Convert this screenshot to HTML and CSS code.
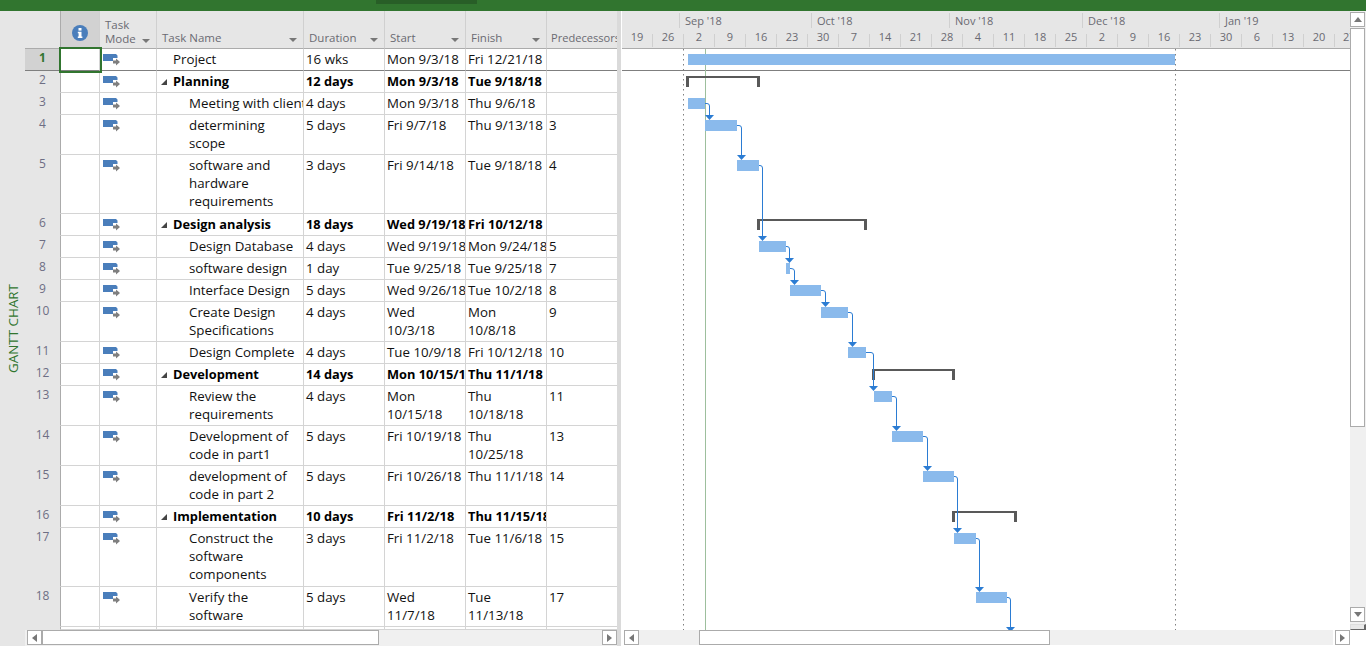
FILE: index.html
```html
<!DOCTYPE html>
<html lang="en">
<head>
    <meta charset="UTF-8">
    <title>Gantt Chart</title>
    <link rel="stylesheet" href="styles.css">
</head>
<body>
    <svg class="defs" width="0" height="0">
        <symbol id="mode" viewBox="0 0 17 12">
            <path fill="#4a7ebb" d="M0 0H13L14.5 1.5V4H10V7H0Z"/>
            <path fill="#7f7f7f" d="M10 6.5H13V4.5L17 8L13 11.5V9.5H10Z"/>
        </symbol>
    </svg>

    <div class="ribbon"><div class="ribbon-tab"></div></div>

    <div class="main">
        <div class="side"><span class="side-label">GANTT CHART</span></div>

        <div class="sheet">
            <div class="table">
                <div class="row head">
                    <div class="hc corner"></div>
                    <div class="hc info">
                        <svg width="16" height="16" viewBox="0 0 16 16"><circle cx="8" cy="8" r="8" fill="#4a7ebb"/><rect x="6.5" y="3" width="3" height="2.6" fill="#fff"/><path fill="#fff" d="M5.8 6.8H9.5V11.6H10.4V13H5.8V11.6H6.6V8.2H5.8Z"/></svg>
                    </div>
                    <div class="hc mode-h"><span>Task<br>Mode</span><i class="drop"></i></div>
                    <div class="hc"><span>Task Name</span><i class="drop"></i></div>
                    <div class="hc"><span>Duration</span><i class="drop"></i></div>
                    <div class="hc"><span>Start</span><i class="drop"></i></div>
                    <div class="hc"><span>Finish</span><i class="drop"></i></div>
                    <div class="hc pred-h"><span>Predecessors</span></div>
                </div>

                <div class="row one selected">
                    <div class="num cur">1</div><div class="c sel"></div><div class="c ic"><svg class="mi"><use href="#mode"/></svg></div>
                    <div class="c top">Project</div><div class="c">16 wks</div><div class="c">Mon 9/3/18</div><div class="c">Fri 12/21/18</div><div class="c"></div>
                </div>
                <div class="row one sum">
                    <div class="num">2</div><div class="c"></div><div class="c ic"><svg class="mi"><use href="#mode"/></svg></div>
                    <div class="c top"><i class="twist"></i>Planning</div><div class="c">12 days</div><div class="c">Mon 9/3/18</div><div class="c">Tue 9/18/18</div><div class="c"></div>
                </div>
                <div class="row one">
                    <div class="num">3</div><div class="c"></div><div class="c ic"><svg class="mi"><use href="#mode"/></svg></div>
                    <div class="c sub">Meeting with client</div><div class="c">4 days</div><div class="c">Mon 9/3/18</div><div class="c">Thu 9/6/18</div><div class="c"></div>
                </div>
                <div class="row two">
                    <div class="num">4</div><div class="c"></div><div class="c ic"><svg class="mi"><use href="#mode"/></svg></div>
                    <div class="c sub">determining<br>scope</div><div class="c">5 days</div><div class="c">Fri 9/7/18</div><div class="c">Thu 9/13/18</div><div class="c">3</div>
                </div>
                <div class="row three">
                    <div class="num">5</div><div class="c"></div><div class="c ic"><svg class="mi"><use href="#mode"/></svg></div>
                    <div class="c sub">software and<br>hardware<br>requirements</div><div class="c">3 days</div><div class="c">Fri 9/14/18</div><div class="c">Tue 9/18/18</div><div class="c">4</div>
                </div>
                <div class="row one sum">
                    <div class="num">6</div><div class="c"></div><div class="c ic"><svg class="mi"><use href="#mode"/></svg></div>
                    <div class="c top"><i class="twist"></i>Design analysis</div><div class="c">18 days</div><div class="c">Wed 9/19/18</div><div class="c">Fri 10/12/18</div><div class="c"></div>
                </div>
                <div class="row one">
                    <div class="num">7</div><div class="c"></div><div class="c ic"><svg class="mi"><use href="#mode"/></svg></div>
                    <div class="c sub">Design Database</div><div class="c">4 days</div><div class="c">Wed 9/19/18</div><div class="c">Mon 9/24/18</div><div class="c">5</div>
                </div>
                <div class="row one">
                    <div class="num">8</div><div class="c"></div><div class="c ic"><svg class="mi"><use href="#mode"/></svg></div>
                    <div class="c sub">software design</div><div class="c">1 day</div><div class="c">Tue 9/25/18</div><div class="c">Tue 9/25/18</div><div class="c">7</div>
                </div>
                <div class="row one">
                    <div class="num">9</div><div class="c"></div><div class="c ic"><svg class="mi"><use href="#mode"/></svg></div>
                    <div class="c sub">Interface Design</div><div class="c">5 days</div><div class="c">Wed 9/26/18</div><div class="c">Tue 10/2/18</div><div class="c">8</div>
                </div>
                <div class="row two">
                    <div class="num">10</div><div class="c"></div><div class="c ic"><svg class="mi"><use href="#mode"/></svg></div>
                    <div class="c sub">Create Design<br>Specifications</div><div class="c">4 days</div><div class="c">Wed<br>10/3/18</div><div class="c">Mon<br>10/8/18</div><div class="c">9</div>
                </div>
                <div class="row one">
                    <div class="num">11</div><div class="c"></div><div class="c ic"><svg class="mi"><use href="#mode"/></svg></div>
                    <div class="c sub">Design Complete</div><div class="c">4 days</div><div class="c">Tue 10/9/18</div><div class="c">Fri 10/12/18</div><div class="c">10</div>
                </div>
                <div class="row one sum">
                    <div class="num">12</div><div class="c"></div><div class="c ic"><svg class="mi"><use href="#mode"/></svg></div>
                    <div class="c top"><i class="twist"></i>Development</div><div class="c">14 days</div><div class="c">Mon 10/15/18</div><div class="c">Thu 11/1/18</div><div class="c"></div>
                </div>
                <div class="row two">
                    <div class="num">13</div><div class="c"></div><div class="c ic"><svg class="mi"><use href="#mode"/></svg></div>
                    <div class="c sub">Review the<br>requirements</div><div class="c">4 days</div><div class="c">Mon<br>10/15/18</div><div class="c">Thu<br>10/18/18</div><div class="c">11</div>
                </div>
                <div class="row two">
                    <div class="num">14</div><div class="c"></div><div class="c ic"><svg class="mi"><use href="#mode"/></svg></div>
                    <div class="c sub">Development of<br>code in part1</div><div class="c">5 days</div><div class="c">Fri 10/19/18</div><div class="c">Thu<br>10/25/18</div><div class="c">13</div>
                </div>
                <div class="row two">
                    <div class="num">15</div><div class="c"></div><div class="c ic"><svg class="mi"><use href="#mode"/></svg></div>
                    <div class="c sub">development of<br>code in part 2</div><div class="c">5 days</div><div class="c">Fri 10/26/18</div><div class="c">Thu 11/1/18</div><div class="c">14</div>
                </div>
                <div class="row one sum">
                    <div class="num">16</div><div class="c"></div><div class="c ic"><svg class="mi"><use href="#mode"/></svg></div>
                    <div class="c top"><i class="twist"></i>Implementation</div><div class="c">10 days</div><div class="c">Fri 11/2/18</div><div class="c">Thu 11/15/18</div><div class="c"></div>
                </div>
                <div class="row three">
                    <div class="num">17</div><div class="c"></div><div class="c ic"><svg class="mi"><use href="#mode"/></svg></div>
                    <div class="c sub">Construct the<br>software<br>components</div><div class="c">3 days</div><div class="c">Fri 11/2/18</div><div class="c">Tue 11/6/18</div><div class="c">15</div>
                </div>
                <div class="row two">
                    <div class="num">18</div><div class="c"></div><div class="c ic"><svg class="mi"><use href="#mode"/></svg></div>
                    <div class="c sub">Verify the<br>software</div><div class="c">5 days</div><div class="c">Wed<br>11/7/18</div><div class="c">Tue<br>11/13/18</div><div class="c">17</div>
                </div>
                <div class="row rest">
                    <div class="num"></div><div class="c"></div><div class="c"></div><div class="c"></div><div class="c"></div><div class="c"></div><div class="c"></div><div class="c"></div>
                </div>
            </div>

            <div class="hscroll sheet-scroll">
                <div class="sb-btn"><i class="tri left"></i></div>
                <div class="sb-thumb thumb-a"></div>
                <div class="sb-track"></div>
                <div class="sb-btn"><i class="tri right"></i></div>
            </div>
        </div>

        <div class="split"></div>

        <div class="gantt">
            <div class="timeline">
                <div class="months">
                    <div class="month m0"></div>
                    <div class="month m1">Sep '18</div>
                    <div class="month m2">Oct '18</div>
                    <div class="month m3">Nov '18</div>
                    <div class="month m4">Dec '18</div>
                    <div class="month m5">Jan '19</div>
                </div>
                <div class="weeks">
                    <div class="wk first">19</div><div class="wk">26</div><div class="wk">2</div><div class="wk">9</div><div class="wk">16</div><div class="wk">23</div><div class="wk">30</div><div class="wk">7</div><div class="wk">14</div><div class="wk">21</div><div class="wk">28</div><div class="wk">4</div><div class="wk">11</div><div class="wk">18</div><div class="wk">25</div><div class="wk">2</div><div class="wk">9</div><div class="wk">16</div><div class="wk">23</div><div class="wk">30</div><div class="wk">6</div><div class="wk">13</div><div class="wk">20</div><div class="wk last">27</div>
                </div>
            </div>

            <!-- chart uses page coordinates in its viewBox -->
            <svg class="chart" width="728" height="581" viewBox="622 49 728 581">
                <defs><polygon id="arr" points="-4.5,0 4.5,0 0,5" fill="#2b7cd3"/></defs>
                <rect x="622" y="70" width="728" height="1" fill="#7f7f7f"/>
                <path d="M683.5 49V630M1175.5 49V630" stroke="#7f7f7f" stroke-dasharray="1.5 3.5" fill="none"/>
                <path d="M705.5 49V630" stroke="#9dbf9d" fill="none"/>

                <g fill="#8abaec">
                    <rect x="688" y="54" width="487" height="11"/>
                    <rect x="688" y="98" width="17" height="11"/>
                    <rect x="705" y="120" width="32" height="11"/>
                    <rect x="737" y="160" width="22" height="11"/>
                    <rect x="759" y="241" width="27" height="11"/>
                    <rect x="786" y="263" width="4" height="11"/>
                    <rect x="790" y="285" width="31" height="11"/>
                    <rect x="821" y="307" width="27" height="11"/>
                    <rect x="848" y="347" width="18" height="11"/>
                    <rect x="874" y="391" width="18" height="11"/>
                    <rect x="892" y="431" width="31" height="11"/>
                    <rect x="923" y="471" width="31" height="11"/>
                    <rect x="954" y="533" width="22" height="11"/>
                    <rect x="976" y="592" width="31" height="11"/>
                </g>

                <g fill="#595959">
                    <path d="M686 76H760V87H757V78H689V87H686Z"/>
                    <path d="M757 219H867V230H864V221H760V230H757Z"/>
                    <path d="M872 369H955V380H952V371H875V380H872Z"/>
                    <path d="M952 511H1017V522H1014V513H955V522H952Z"/>
                </g>

                <g fill="none" stroke="#2b7cd3">
                    <path d="M705 103.5H707Q709.5 103.5 709.5 106V116"/>
                    <path d="M737 125.5H739Q741.5 125.5 741.5 128V156"/>
                    <path d="M759 165.5H760Q762.5 165.5 762.5 168V237"/>
                    <path d="M786 246.5H787Q789.5 246.5 789.5 249V259"/>
                    <path d="M790 268.5H791Q794.5 268.5 794.5 271V281"/>
                    <path d="M821 290.5H823Q825.5 290.5 825.5 293V303"/>
                    <path d="M848 312.5H850Q852.5 312.5 852.5 315V343"/>
                    <path d="M866 352.5H871Q873.5 352.5 873.5 355V387"/>
                    <path d="M892 396.5H894Q896.5 396.5 896.5 399V427"/>
                    <path d="M923 436.5H925Q927.5 436.5 927.5 439V467"/>
                    <path d="M954 476.5H955Q957.5 476.5 957.5 479V529"/>
                    <path d="M976 538.5H977Q979.5 538.5 979.5 541V588"/>
                    <path d="M1007 597.5H1008Q1010.5 597.5 1010.5 600V630"/>
                </g>
                <use href="#arr" x="709.5" y="115"/>
                <use href="#arr" x="741.5" y="155"/>
                <use href="#arr" x="762.5" y="236"/>
                <use href="#arr" x="789.5" y="258"/>
                <use href="#arr" x="794.5" y="280"/>
                <use href="#arr" x="825.5" y="302"/>
                <use href="#arr" x="852.5" y="342"/>
                <use href="#arr" x="873.5" y="386"/>
                <use href="#arr" x="896.5" y="426"/>
                <use href="#arr" x="927.5" y="466"/>
                <use href="#arr" x="957.5" y="528"/>
                <use href="#arr" x="979.5" y="587"/>
                <use href="#arr" x="1010.5" y="627"/>
            </svg>

            <div class="hscroll chart-scroll">
                <div class="sb-btn"><i class="tri left"></i></div>
                <div class="sb-track track-a"></div>
                <div class="sb-thumb thumb-b"></div>
                <div class="sb-track"></div>
                <div class="sb-btn btn-end"><i class="tri right"></i></div>
            </div>
        </div>

        <div class="vscroll">
            <div class="sb-btn"><i class="tri up"></i></div>
            <div class="sb-thumb thumb-v"></div>
            <div class="sb-track"></div>
            <div class="sb-btn"><i class="tri down"></i></div>
            <div class="grip"></div>
        </div>
    </div>
</body>
</html>
```

FILE: styles.css
```css
* {
    box-sizing: border-box;
}

body {
    margin: 0;
    width: 1366px;
    height: 646px;
    overflow: hidden;
    background-color: white;
    color: #111;
    font-family: "Open Sans", "Noto Sans", sans-serif;
    font-size: 13.3px;
    line-height: 18px;
}

.defs {
    position: absolute;
}

.ribbon {
    height: 11px;
    background-color: #31752f;
    padding-left: 376px;
}

.ribbon-tab {
    width: 101px;
    height: 4px;
    background-color: #285e27;
}

.main {
    display: flex;
    height: 635px;
}

.side {
    width: 25px;
    background-color: #e6e6e6;
    display: flex;
    align-items: center;
    justify-content: center;
}

.side-label {
    writing-mode: vertical-rl;
    transform: rotate(180deg);
    color: #31752f;
    font-size: 13.4px;
}

.sheet {
    width: 592px;
    display: flex;
    flex-direction: column;
}

.table {
    height: 619px;
    display: flex;
    flex-direction: column;
    overflow: hidden;
}

.row {
    display: grid;
    grid-template-columns: 36px 39px 57px 147px 81px 81px 81px 70px;
    flex-shrink: 0;
}

.head { height: 38px; }
.one { height: 22px; }
.two { height: 40px; }
.three { height: 59px; }
.rest { flex: 1; }

.hc {
    background-color: #e6e6e6;
    border-right: 1px solid #d0d0d0;
    border-bottom: 1px solid #ababab;
    padding: 0 6px 3px 5px;
    color: #6a6a72;
    font-size: 11.5px;
    line-height: 14px;
    display: flex;
    justify-content: space-between;
    align-items: flex-end;
    white-space: nowrap;
    overflow: hidden;
}

.hc.corner {
    border-right-color: #ababab;
}

.hc.info {
    background-color: #d2d2d2;
    justify-content: center;
    align-items: center;
    padding: 6px 0 0 0;
}

.hc.mode-h {
    padding-bottom: 2px;
}

.hc.pred-h {
    padding: 0 0 3px 4px;
    border-right: none;
    font-size: 11.1px;
}

.drop {
    width: 0;
    height: 0;
    margin-bottom: 3px;
    border-left: 4px solid transparent;
    border-right: 4px solid transparent;
    border-top: 4px solid #777;
}

.c {
    border-right: 1px solid #d4d4d4;
    border-bottom: 1px solid #d4d4d4;
    padding: 1px 0 0 2px;
    white-space: nowrap;
    overflow: hidden;
}

.c:last-child {
    border-right: none;
}

.num {
    background-color: #e6e6e6;
    border-right: 1px solid #ababab;
    border-bottom: 1px solid #e6e6e6;
    color: #6e6e84;
    font-size: 12px;
    text-align: center;
}

.num.cur {
    background-color: #d2d2d2;
    color: #31752f;
    font-weight: bold;
}

.selected .c,
.selected .num {
    border-bottom-color: #7f7f7f;
}

.sel {
    outline: 2px solid #31752f;
    outline-offset: 0;
    position: relative;
}

.ic {
    padding: 5px 0 0 3px;
}

.mi {
    display: block;
    width: 17px;
    height: 12px;
}

.top {
    padding-left: 16px;
}

.sub {
    padding-left: 32px;
}

.sum .c {
    font-size: 12.8px;
    font-weight: bold;
    color: #000;
}

.twist {
    display: inline-block;
    width: 6px;
    height: 6px;
    margin-left: -12px;
    margin-right: 6px;
    vertical-align: 1px;
    background-color: #444;
    clip-path: polygon(100% 0, 100% 100%, 0 100%);
}

.split {
    width: 5px;
    background-color: #dadada;
    border-right: 1px solid white;
}

.gantt {
    width: 728px;
    display: flex;
    flex-direction: column;
}

.timeline {
    height: 38px;
    background-color: #e6e6e6;
    border-bottom: 1px solid #ababab;
    color: #6a6a72;
    font-size: 11px;
    overflow: hidden;
}

.months {
    display: flex;
    height: 18px;
    padding-top: 2px;
}

.month {
    border-left: 1px solid #d0d0d0;
    padding-left: 5px;
    height: 15px;
    line-height: 16px;
}

.m0 { width: 57px; border-left: none; }
.m1 { width: 132px; }
.m2 { width: 138px; }
.m3 { width: 133px; }
.m4 { width: 137px; }
.m5 { width: 130px; }

.weeks {
    display: flex;
    height: 19px;
    padding-top: 5px;
}

.wk {
    flex: 0 0 31px;
    height: 13px;
    line-height: 6px;
    text-align: center;
    border-right: 1px solid #d0d0d0;
}

.wk.last {
    flex: 0 0 15px;
    border-right: none;
    text-align: left;
    padding-left: 8px;
}

.chart {
    display: block;
    flex-shrink: 0;
}

.hscroll {
    display: flex;
    height: 16px;
    background-color: white;
}

.sheet-scroll {
    padding-left: 2px;
    background-color: #f0f0f0;
}

.chart-scroll {
    padding-left: 2px;
}

.sb-btn {
    flex: 0 0 15px;
    height: 15px;
    background-color: white;
    border: 1px solid #ababab;
    display: flex;
    align-items: center;
    justify-content: center;
}

.sb-thumb {
    background-color: white;
    border: 1px solid #ababab;
}

.sb-track {
    flex: 1;
    height: 15px;
    background-color: #f0f0f0;
}

.thumb-a {
    flex: 0 0 337px;
    height: 15px;
}

.thumb-b {
    flex: 0 0 351px;
    height: 15px;
}

.track-a {
    flex: 0 0 60px;
}

.btn-end {
    margin-left: 2px;
}

.vscroll {
    width: 16px;
    height: 619px;
    display: flex;
    flex-direction: column;
    align-items: stretch;
    padding-top: 1px;
    background-color: #f0f0f0;
}

.vscroll .sb-btn {
    flex: 0 0 15px;
    width: 15px;
}

.thumb-v {
    flex: 0 0 399px;
    width: 15px;
    margin-top: 1px;
}

.vscroll .sb-track {
    height: auto;
}

.grip {
    flex: 0 0 6px;
    margin-top: 2px;
    width: 16px;
    background-color: #e8e8e8;
    border: 1px solid #ddd;
    border-right: 2px solid #666;
    border-bottom: 1px solid #666;
}

.tri {
    width: 0;
    height: 0;
    display: block;
    border: 0 solid transparent;
}

.tri.left {
    border-top-width: 4px;
    border-bottom-width: 4px;
    border-right: 5px solid #777;
}

.tri.right {
    border-top-width: 4px;
    border-bottom-width: 4px;
    border-left: 5px solid #777;
}

.tri.up {
    border-left-width: 4px;
    border-right-width: 4px;
    border-bottom: 5px solid #777;
}

.tri.down {
    border-left-width: 4px;
    border-right-width: 4px;
    border-top: 5px solid #777;
}
```
